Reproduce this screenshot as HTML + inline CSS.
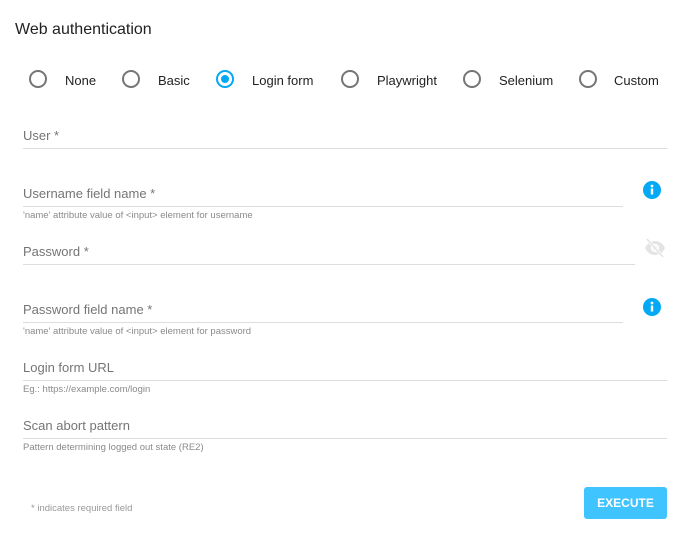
<!DOCTYPE html>
<html><head><style>
body{margin:0;width:685px;height:538px;background:#fff;font-family:"Liberation Sans",Roboto,sans-serif;position:relative;overflow:hidden}
.a{position:absolute;white-space:nowrap}
.t{left:15px;top:21px;font-size:16px;color:#222}
.r{width:14px;height:14px;border:2px solid #757575;border-radius:50%;top:70px}
.rl{font-size:13px;color:#222;top:73px}
.sel{border-color:#03a9f4}
.sel::after{content:"";position:absolute;left:3px;top:3px;width:8px;height:8px;border-radius:50%;background:#03a9f4}
.lb{font-size:13px;color:#757575;left:23px}
.ln{height:1px;background:#ddd;left:23px}
.h{font-size:9.5px;color:#8a8a8a;left:23px}
</style></head><body>
<div class="a t">Web authentication</div>
<div class="a r" style="left:29px"></div><div class="a rl" style="left:65px">None</div>
<div class="a r" style="left:122px"></div><div class="a rl" style="left:158px">Basic</div>
<div class="a r sel" style="left:216px"></div><div class="a rl" style="left:252px">Login form</div>
<div class="a r" style="left:341px"></div><div class="a rl" style="left:377px">Playwright</div>
<div class="a r" style="left:463px"></div><div class="a rl" style="left:499px">Selenium</div>
<div class="a r" style="left:579px"></div><div class="a rl" style="left:614px">Custom</div>

<div class="a lb" style="top:128px">User *</div>
<div class="a ln" style="top:148px;width:644px"></div>

<div class="a lb" style="top:186px">Username field name *</div>
<div class="a ln" style="top:206px;width:600px"></div>
<div class="a h" style="top:210px">'name' attribute value of &lt;input&gt; element for username</div>
<svg class="a" style="left:643px;top:181px" width="18" height="18" viewBox="0 0 18 18"><circle cx="9" cy="9" r="9" fill="#03a9f4"/><circle cx="9" cy="5" r="1.4" fill="#fff"/><rect x="7.8" y="7.5" width="2.4" height="6" fill="#fff"/></svg>

<div class="a lb" style="top:244px">Password *</div>
<div class="a ln" style="top:264px;width:612px"></div>
<svg class="a" style="left:644px;top:238px" width="22" height="20" viewBox="0 0 22 20"><path d="M1 10C4 4 8 3 11 3s7 1 10 7c-3 6-7 7-10 7S4 16 1 10z" fill="#e4e4e4"/><circle cx="11" cy="10" r="4" fill="#fff"/><circle cx="11" cy="10" r="2.2" fill="#e4e4e4"/><path d="M3 1L19 19" stroke="#fff" stroke-width="3"/><path d="M3 1L19 19" stroke="#e4e4e4" stroke-width="1.6"/></svg>

<div class="a lb" style="top:302px">Password field name *</div>
<div class="a ln" style="top:322px;width:600px"></div>
<div class="a h" style="top:326px">'name' attribute value of &lt;input&gt; element for password</div>
<svg class="a" style="left:643px;top:298px" width="18" height="18" viewBox="0 0 18 18"><circle cx="9" cy="9" r="9" fill="#03a9f4"/><circle cx="9" cy="5" r="1.4" fill="#fff"/><rect x="7.8" y="7.5" width="2.4" height="6" fill="#fff"/></svg>

<div class="a lb" style="top:360px">Login form URL</div>
<div class="a ln" style="top:380px;width:644px"></div>
<div class="a h" style="top:384px">Eg.: https://example.com/login</div>

<div class="a lb" style="top:418px">Scan abort pattern</div>
<div class="a ln" style="top:438px;width:644px"></div>
<div class="a h" style="top:442px">Pattern determining logged out state (RE2)</div>

<div class="a h" style="left:31px;top:503px;color:#999">* indicates required field</div>
<div class="a" style="left:584px;top:487px;width:83px;height:32px;background:#40c4ff;border-radius:3px;color:#fff;font-size:12px;font-weight:bold;text-align:center;line-height:32px">EXECUTE</div>
</body></html>
